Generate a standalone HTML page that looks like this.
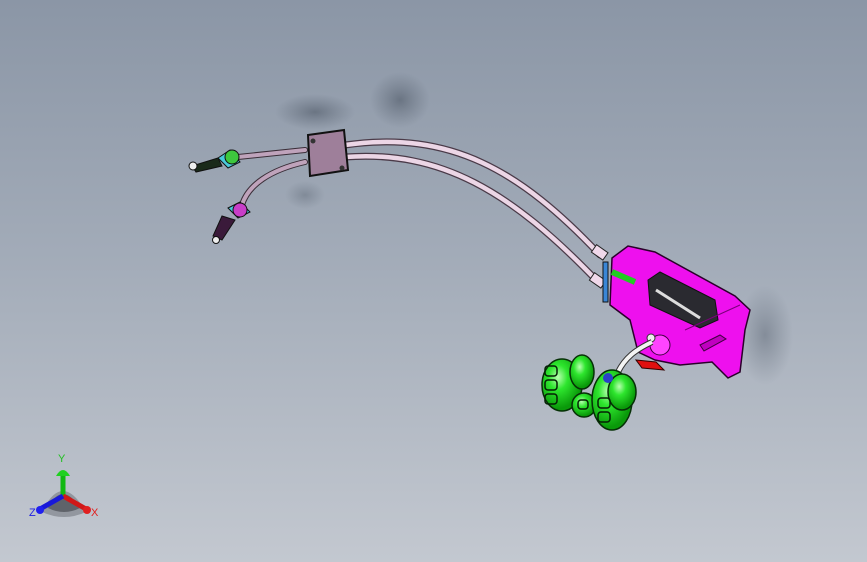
<!DOCTYPE html>
<html><head><style>
html,body{margin:0;padding:0;width:867px;height:562px;overflow:hidden}
body{background:linear-gradient(180deg,#8b96a6 0%,#a2abb8 45%,#c3c8d0 100%);font-family:"Liberation Sans",sans-serif}
svg{position:absolute;left:0;top:0}
</style></head><body>
<svg width="867" height="562" viewBox="0 0 867 562">
<defs>
<radialGradient id="sh" cx="50%" cy="50%" r="50%"><stop offset="0" stop-color="#4e5866" stop-opacity=".6"/><stop offset="1" stop-color="#5a6472" stop-opacity="0"/></radialGradient>
<radialGradient id="gr" cx="40%" cy="35%" r="60%"><stop offset="0" stop-color="#b8ffb0"/><stop offset=".4" stop-color="#2ee62e"/><stop offset="1" stop-color="#0a9a0a"/></radialGradient>
</defs>
<!-- shadows -->
<ellipse cx="315" cy="112" rx="40" ry="18" fill="url(#sh)"/>
<ellipse cx="400" cy="100" rx="30" ry="28" fill="url(#sh)"/>
<ellipse cx="305" cy="195" rx="20" ry="14" fill="url(#sh)" opacity=".6"/>
<ellipse cx="765" cy="335" rx="28" ry="50" fill="url(#sh)" opacity=".7"/>
<!-- cables -->
<g fill="none" stroke-linecap="round">
<path d="M345,145 C450,130 520,170 600,255" stroke="#4a3a48" stroke-width="7"/>
<path d="M345,145 C450,130 520,170 600,255" stroke="#ecd6e6" stroke-width="4.5"/>
<path d="M345,157 C440,150 510,190 598,282" stroke="#4a3a48" stroke-width="7"/>
<path d="M345,157 C440,150 510,190 598,282" stroke="#ecd6e6" stroke-width="4.5"/>
<path d="M305,150 L238,157" stroke="#3a2e38" stroke-width="6"/>
<path d="M305,150 L238,157" stroke="#bfa3bb" stroke-width="4"/>
<path d="M305,162 C270,170 248,185 242,205" stroke="#3a2e38" stroke-width="6"/>
<path d="M305,162 C270,170 248,185 242,205" stroke="#bfa3bb" stroke-width="4"/>
</g>
<!-- plate -->
<path d="M308,135 L344,130 L348,170 L310,176 Z" fill="#9e7f9a" stroke="#111" stroke-width="2"/>
<circle cx="313" cy="141" r="2.5" fill="#333"/><circle cx="342" cy="168" r="2.5" fill="#333"/>
<!-- left ends -->
<path d="M218,158 l12,-8 l10,12 l-12,6z" fill="#49c9d9" stroke="#111"/>
<circle cx="232" cy="157" r="7" fill="#3ec83e" stroke="#111"/>
<path d="M192,166 L218,158 L222,166 L196,172z" fill="#1a2a1a" stroke="#111"/>
<circle cx="193" cy="166" r="4" fill="#eee" stroke="#111"/>
<path d="M228,208 l12,-6 l10,10 l-12,6z" fill="#49c9d9" stroke="#111"/>
<circle cx="240" cy="210" r="7" fill="#c83ec8" stroke="#111"/>
<path d="M222,216 L235,220 L222,240 L213,236z" fill="#3a1a3a" stroke="#111"/>
<circle cx="216" cy="240" r="3.5" fill="#eee" stroke="#111"/>
<!-- connectors at housing -->
<rect x="593" y="248" width="14" height="9" fill="#f0d8ea" stroke="#222" transform="rotate(35 600 252)"/>
<rect x="591" y="276" width="14" height="9" fill="#f0d8ea" stroke="#222" transform="rotate(35 598 280)"/>
<!-- housing -->
<path d="M612,258 L628,246 L655,252 L735,296 L750,310 L745,330 L740,372 L728,378 L712,362 L680,365 L655,360 L638,352 L630,320 L610,305 Z" fill="#ee10ee" stroke="#2a002a" stroke-width="1.5"/>
<path d="M648,280 L660,272 L715,300 L718,320 L700,328 L650,305Z" fill="#2a2a30" stroke="#111"/>
<path d="M656,290 L700,318" stroke="#ddd" stroke-width="3"/>
<path d="M685,330 L740,305" stroke="#7a007a"/>
<path d="M700,345 l20,-10 l6,4 l-22,12z" fill="#c000c0" stroke="#400040"/>
<rect x="603" y="262" width="5" height="40" fill="#3a86d6" stroke="#111"/>
<path d="M612,272 L635,282" stroke="#22cc22" stroke-width="6"/>
<circle cx="660" cy="345" r="10" fill="#ff44ff" stroke="#400040"/>
<circle cx="651" cy="338" r="4" fill="#eee" stroke="#333"/>
<path d="M636,360 l20,2 l8,8 l-22,-2z" fill="#e01010" stroke="#300"/>
<path d="M652,342 C635,350 625,358 618,372" stroke="#333" stroke-width="6" fill="none"/>
<path d="M652,342 C635,350 625,358 618,372" stroke="#f4f4f4" stroke-width="4" fill="none"/>
<!-- green blobs -->
<g stroke="#063006" stroke-width="1.5" fill="url(#gr)">
<ellipse cx="562" cy="385" rx="20" ry="26"/>
<ellipse cx="582" cy="372" rx="12" ry="17"/>
<ellipse cx="584" cy="405" rx="12" ry="12"/>
<ellipse cx="612" cy="400" rx="20" ry="30"/>
<ellipse cx="622" cy="392" rx="14" ry="18"/>
</g>
<g stroke="#042004" stroke-width="1.5" fill="none">
<rect x="545" y="366" width="12" height="10" rx="3"/><rect x="545" y="380" width="12" height="10" rx="3"/><rect x="545" y="394" width="12" height="10" rx="3"/>
<rect x="598" y="398" width="12" height="10" rx="3"/><rect x="598" y="412" width="12" height="10" rx="3"/><rect x="578" y="400" width="10" height="9" rx="3"/>
</g>
<circle cx="608" cy="378" r="5" fill="#2a40c8"/>
<!-- triad -->
<path d="M42,512 Q62,470 86,512 Q64,522 42,512Z" fill="#6e737a" opacity=".55"/>
<path d="M48,508 Q62,480 80,508 Q64,516 48,508Z" fill="#3d4147" opacity=".6"/>
<line x1="63" y1="496" x2="63" y2="474" stroke="#12b812" stroke-width="5"/>
<path d="M56,476 Q63,464 70,476Z" fill="#20d020"/>
<line x1="63" y1="496" x2="86" y2="509" stroke="#d01818" stroke-width="5"/>
<circle cx="87" cy="510" r="4" fill="#e02020"/>
<line x1="63" y1="496" x2="40" y2="509" stroke="#1818d8" stroke-width="5"/>
<circle cx="40" cy="510" r="4" fill="#2020ee"/>
<text x="58" y="462" font-size="11" fill="#22c022" font-family="Liberation Sans">Y</text>
<text x="91" y="516" font-size="11" fill="#e02020" font-family="Liberation Sans">X</text>
<text x="29" y="516" font-size="11" fill="#2020e0" font-family="Liberation Sans">Z</text>
</svg>
</body></html>
